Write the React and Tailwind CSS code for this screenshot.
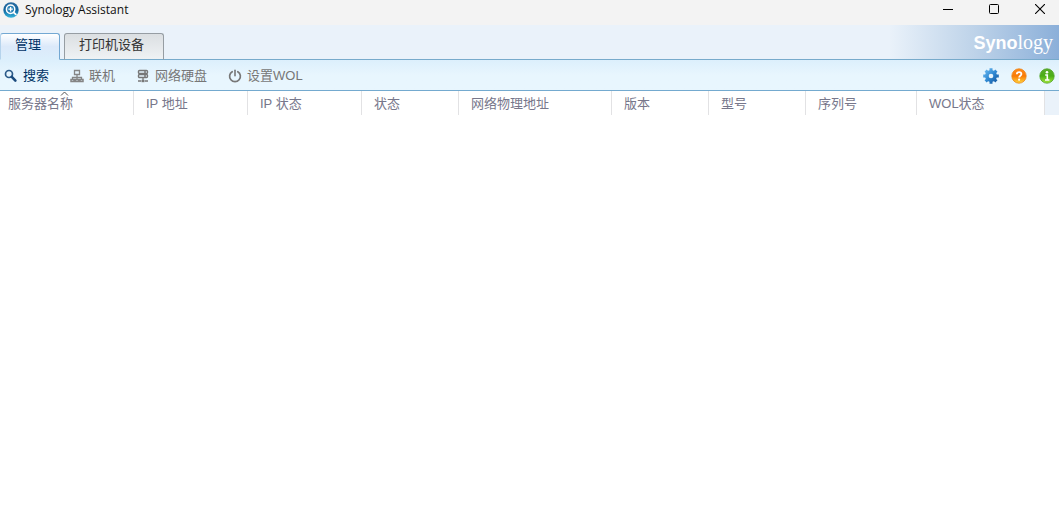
import { useState } from 'react'

const TABS = [
  { id: 'manage', label: '管理', width: 'w-[60px]' },
  { id: 'printer', label: '打印机设备', width: 'w-[100px]' },
]

const COLUMNS = [
  { label: '服务器名称', width: 'w-[134px]', sorted: true },
  { label: 'IP 地址', width: 'w-[114px]' },
  { label: 'IP 状态', width: 'w-[114px]' },
  { label: '状态', width: 'w-[97px]' },
  { label: '网络物理地址', width: 'w-[153px]' },
  { label: '版本', width: 'w-[97px]' },
  { label: '型号', width: 'w-[97px]' },
  { label: '序列号', width: 'w-[111px]' },
  { label: 'WOL状态', width: 'w-[128px]' },
]

const ACTIONS = [
  { label: '搜索', Icon: SearchIcon, enabled: true },
  { label: '联机', Icon: ConnectIcon },
  { label: '网络硬盘', Icon: DriveIcon },
  { label: '设置WOL', Icon: PowerIcon },
]

function AppIcon() {
  return (
    <svg width="16" height="16" viewBox="0 0 16 16" aria-hidden="true">
      <defs>
        <linearGradient id="app-bg" x1="0" y1="0" x2="0" y2="1">
          <stop offset="0" stopColor="#2d6ca0" />
          <stop offset="0.5" stopColor="#10649f" />
          <stop offset="1" stopColor="#35b5dc" />
        </linearGradient>
      </defs>
      <circle cx="8" cy="8" r="7.7" fill="url(#app-bg)" />
      <circle cx="7.6" cy="7.2" r="4.2" fill="#2b83b8" stroke="#fff" strokeWidth="1.5" />
      <path d="M7.6 5v4.4M5.4 7.2h4.4" stroke="#fff" strokeWidth="1.3" />
      <path d="M10.6 10.4l2.2 2" stroke="#fff" strokeWidth="1.8" strokeLinecap="round" />
    </svg>
  )
}

function SearchIcon() {
  return (
    <svg width="14" height="14" viewBox="0 0 14 14" fill="none" aria-hidden="true">
      <circle cx="5" cy="5" r="3.5" stroke="#2b5a88" strokeWidth="1.7" />
      <path d="M7.8 7.8l3.6 3.8" stroke="#1c4c7e" strokeWidth="2.6" strokeLinecap="round" />
    </svg>
  )
}

function ConnectIcon() {
  return (
    <svg width="14" height="14" viewBox="0 0 14 14" fill="none" stroke="#858585" aria-hidden="true">
      <path d="M4.5 1.5h5v4h-5zM7 5.5v3M2.5 10v-1.5h9V10M7 8.5V10" strokeWidth="1.3" />
      <path d="M1 10.5h3v2H1zM5.5 10.5h3v2h-3zM10 10.5h3v2h-3z" strokeWidth="1.5" />
    </svg>
  )
}

function DriveIcon() {
  return (
    <svg width="14" height="14" viewBox="0 0 14 14" fill="none" stroke="#777" aria-hidden="true">
      <rect x="2.5" y="1.5" width="9" height="3" rx="1" strokeWidth="1.4" />
      <rect x="2.5" y="5.5" width="9" height="3" rx="1" strokeWidth="1.4" />
      <path d="M8 3h2M8 7h2M7 8.5v3M2 12h3M9 12h3" strokeWidth="1.3" />
      <path d="M5.5 12h3" strokeWidth="2.4" />
    </svg>
  )
}

function PowerIcon() {
  return (
    <svg width="14" height="14" viewBox="0 0 14 14" fill="none" stroke="#777" strokeLinecap="round" aria-hidden="true">
      <path d="M4.2 2.7a5.4 5.4 0 1 0 5.6 0" strokeWidth="1.7" />
      <path d="M7 1.2v5.6" strokeWidth="1.6" />
    </svg>
  )
}

function GearIcon() {
  return (
    <svg width="16" height="16" viewBox="0 0 16 16" aria-hidden="true">
      <defs>
        <linearGradient id="gear" gradientUnits="userSpaceOnUse" x1="1" y1="1" x2="15" y2="15">
          <stop offset="0" stopColor="#6dbaf0" />
          <stop offset="0.5" stopColor="#3089d3" />
          <stop offset="1" stopColor="#12549c" />
        </linearGradient>
      </defs>
      <g stroke="url(#gear)" strokeWidth="3">
        <path d="M8 .2v15.6M.2 8h15.6M2.6 2.6l10.8 10.8M13.4 2.6L2.6 13.4" />
      </g>
      <circle cx="8" cy="8" r="4.4" fill="none" stroke="url(#gear)" strokeWidth="3.2" />
      <circle cx="8" cy="8" r="2.3" fill="#e7f5fd" />
    </svg>
  )
}

function HelpIcon() {
  return (
    <svg width="16" height="16" viewBox="0 0 16 16" aria-hidden="true">
      <defs>
        <linearGradient id="help" x1="0" y1="0" x2="0" y2="1">
          <stop offset="0" stopColor="#ff8a1c" />
          <stop offset="0.5" stopColor="#f97a06" />
          <stop offset="1" stopColor="#ffd83c" />
        </linearGradient>
      </defs>
      <circle cx="8" cy="8" r="7.2" fill="url(#help)" stroke="#ec8518" strokeWidth="0.8" />
      <path d="M5.8 6.3c0-3 4.6-2.8 4.6-.2 0 1.6-2.2 1.6-2.2 3.3" fill="none" stroke="#fff" strokeWidth="1.8" />
      <circle cx="8.1" cy="11.7" r="1.1" fill="#fff" />
    </svg>
  )
}

function InfoIcon() {
  return (
    <svg width="16" height="16" viewBox="0 0 16 16" aria-hidden="true">
      <defs>
        <linearGradient id="info" x1="0" y1="0" x2="0" y2="1">
          <stop offset="0" stopColor="#5cab2d" />
          <stop offset="0.5" stopColor="#4aae16" />
          <stop offset="1" stopColor="#a5e83c" />
        </linearGradient>
      </defs>
      <circle cx="8" cy="8" r="7.2" fill="url(#info)" stroke="#4fa326" strokeWidth="0.8" />
      <circle cx="8" cy="4.2" r="1.3" fill="#fff" />
      <path d="M6.2 7h2.1v4.6M6 12h4.4" fill="none" stroke="#fff" strokeWidth="1.6" />
    </svg>
  )
}

function WindowButtons() {
  return (
    <div className="-mr-1 flex h-[18px]">
      <button type="button" aria-label="最小化" className="flex w-[46px] items-center justify-center">
        <svg width="10" height="10"><path d="M0 5.5h10" stroke="#000" /></svg>
      </button>
      <button type="button" aria-label="最大化" className="flex w-[46px] items-center justify-center">
        <svg width="10" height="10"><rect x="0.5" y="0.5" width="9" height="9" rx="1" fill="none" stroke="#000" /></svg>
      </button>
      <button type="button" aria-label="关闭" className="flex w-[46px] items-center justify-center">
        <svg width="10" height="10"><path d="M0 0l10 10M10 0L0 10" stroke="#000" strokeWidth="1.1" /></svg>
      </button>
    </div>
  )
}

export default function App() {
  const [tab, setTab] = useState('manage')

  return (
    <div className="min-h-screen overflow-hidden bg-white font-['Liberation_Sans','Noto_Sans_CJK_SC',sans-serif] text-[13px] leading-4">
      <header className="flex h-[25px] items-start justify-between bg-[#f3f3f3] pl-[3px]">
        <div className="flex items-center gap-[6px]">
          <AppIcon />
          <h1 className="font-['Open_Sans',sans-serif] text-[12px] leading-5 text-[#111]">Synology Assistant</h1>
        </div>
        <WindowButtons />
      </header>

      <div className="flex h-[35px] items-end justify-between border-b border-[#77aacb] bg-[#eaf2fa]">
        <div role="tablist" className="-mb-px flex items-end gap-1">
          {TABS.map(t => (
            <button
              key={t.id}
              type="button"
              role="tab"
              aria-selected={tab === t.id}
              onClick={() => setTab(t.id)}
              className={`${t.width} h-[27px] rounded-t-[3px] border pb-1 pl-[14px] text-left ${
                tab === t.id
                  ? 'border-[#73a8d3] border-b-[#dceffc] border-l-[#b5d3ec] bg-linear-to-b from-white via-[#dbe9fa] to-[#dceffc] text-[#003366]'
                  : 'border-[#969da3] border-b-[#77aacb] bg-linear-to-b from-[#dbdfe2] to-[#eff2f4] text-[#333]'
              }`}
            >
              {t.label}
            </button>
          ))}
        </div>
        <div className="flex h-full w-[170px] items-baseline justify-end bg-linear-to-r from-[#eaf2fa] via-[#bed3e9] to-[#8bafd9] pr-[6px] leading-[34px] text-white">
          <span className="text-[18px] font-bold">Syno</span>
          <span className="font-['Liberation_Serif',serif] text-[20px]">logy</span>
        </div>
      </div>

      <div className="flex h-[31px] items-center justify-between border-b border-[#74aacf] bg-linear-to-b from-[#dceffc] via-[#e8f6fe] to-[#e8f6fe] px-1 pt-px">
        <div className="flex items-center gap-[21px]">
          {ACTIONS.map(({ label, Icon, enabled }) => (
            <button
              key={label}
              type="button"
              disabled={!enabled}
              className={`flex items-center gap-[5px] ${enabled ? 'text-[#003366]' : 'text-[#777]'}`}
            >
              <Icon />
              {label}
            </button>
          ))}
        </div>
        <div className="flex items-center gap-3">
          <button type="button" aria-label="设置"><GearIcon /></button>
          <button type="button" aria-label="帮助"><HelpIcon /></button>
          <button type="button" aria-label="信息"><InfoIcon /></button>
        </div>
      </div>

      <table className="w-full table-fixed border-collapse text-[#77778b]">
        <thead>
          <tr className="h-6">
            {COLUMNS.map(c => (
              <th
                key={c.label}
                scope="col"
                aria-sort={c.sorted ? 'ascending' : undefined}
                className={`${c.width} relative pt-[2px] text-left font-normal shadow-[inset_-1px_0_#e2e2e4] ${c.sorted ? 'pl-2' : 'pl-3'}`}
              >
                {c.sorted && (
                  <svg width="9" height="5" viewBox="0 0 9 5" className="absolute top-0 left-[60px]" aria-hidden="true">
                    <path d="M1 4.5l3.5-3.5L8 4.5" fill="none" stroke="#555" />
                  </svg>
                )}
                {c.label}
              </th>
            ))}
            <td className="bg-[#eaf2fa] p-0" />
          </tr>
        </thead>
        <tbody />
      </table>
    </div>
  )
}
